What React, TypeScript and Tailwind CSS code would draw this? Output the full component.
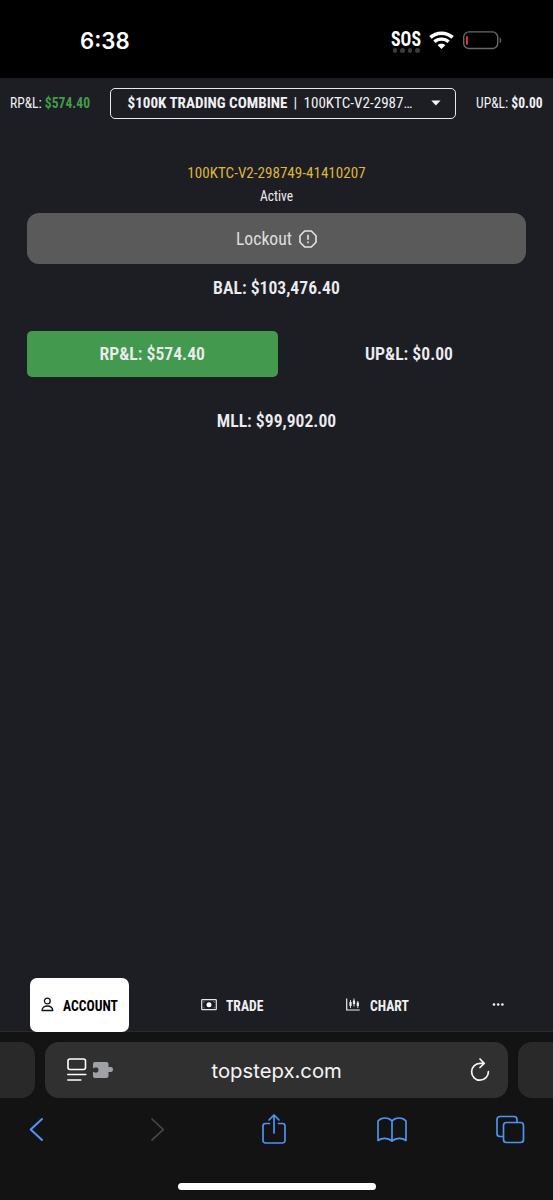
import React from "react";

const cond = "font-['Roboto_Condensed','Roboto',sans-serif] [font-stretch:75%] whitespace-nowrap";

function StatusBar() {
  return (
    <div className="flex h-[78px] bg-black text-white">
      <div className="ml-[80px] mt-[27px] w-[311px] font-['Inter',sans-serif] text-[22.2px] font-semibold leading-[28px]">
        6:38
      </div>
      <div className="mt-[28px] w-[30px]">
        <div className={`${cond} w-[34px] origin-left scale-x-[.87] text-[20.5px] font-bold leading-[22px]`}>SOS</div>
        <div className="-mt-[2px] flex gap-[3px] pl-[1.5px]">
          {[0, 1, 2, 3].map((i) => (
            <i key={i} className="h-[4.5px] w-[4.5px] rounded-full bg-[#3b3b3b]" />
          ))}
        </div>
      </div>
      <svg className="ml-[8px] mt-[31px]" width="25" height="19" viewBox="0 0 25 19" fill="none" stroke="#fff">
        <path d="M1.4 6.4C7.5 .7 17.5 .7 23.6 6.4" strokeWidth="3.5" />
        <path d="M5.4 10.7C9.2 7.2 15.8 7.2 19.6 10.7" strokeWidth="3.4" />
        <path d="M12.5 18 8.7 14.2C10.8 12.3 14.2 12.3 16.3 14.2Z" fill="#fff" stroke="none" />
      </svg>
      <svg className="ml-[8px] mt-[30px]" width="42" height="20" viewBox="0 0 42 20" fill="none">
        <rect x="1.7" y="1.9" width="34" height="16.6" rx="5.2" stroke="#686868" strokeWidth="1.4" />
        <path d="M37.7 7.5c2 .8 2 4.8 0 5.6Z" fill="#686868" />
        <rect x="4" y="6" width="1.8" height="8.8" rx=".9" fill="#f2383b" />
      </svg>
    </div>
  );
}

function Header() {
  return (
    <div className={`${cond} flex h-[50px] items-center text-[14px] text-[#f1f1f3]`}>
      <div className="w-[110px] pl-[10px] pt-px">
        <div className="w-[84px] origin-left scale-x-[.97]">
          RP&amp;L: <b className="font-bold text-[#419d4a]">$574.40</b>
        </div>
      </div>
      <div className="flex h-[31px] w-[346px] items-center rounded-[5px] border-[1.5px] border-[#e9e9ec] pl-[16.5px] text-[15.1px]">
        <div className="w-[166px] font-bold">$100K TRADING COMBINE</div>
        <div className="w-[10px]">|</div>
        <div className="w-[127.5px]">100KTC-V2-2987…</div>
        <svg width="10" height="6" viewBox="0 0 10 6" fill="#f5f5f5">
          <path d="M.3.5h9.2L4.9 5.4Z" />
        </svg>
      </div>
      <div className="ml-[20px] origin-left scale-x-[.97] pt-px">
        UP&amp;L: <b className="font-bold">$0.00</b>
      </div>
    </div>
  );
}

function Account() {
  return (
    <div className={`${cond} flex h-[850px] flex-col px-[27px] pt-[34px] text-center text-[#ececf0]`}>
      <div className="h-[22px] text-[15.1px] leading-[22px] text-[#dfb53c]">100KTC-V2-298749-41410207</div>
      <div className="mt-[2px] h-[20px] scale-x-[.965] text-[14px] leading-[21px]">Active</div>
      <div className="mt-[7px] flex h-[51px] w-[499px] items-center justify-center gap-[7px] rounded-[12px] bg-[#5a5a5a] text-[17.7px] text-[#dededf]">
        <span className="pt-px">Lockout</span>
        <svg width="18" height="18" viewBox="0 0 18 18" fill="none" stroke="#e5e5e6" strokeWidth="1.6" strokeLinejoin="round">
          <path d="M5.7 1h6.6L17 5.7v6.6L12.3 17H5.7L1 12.3V5.7Z" />
          <path d="M9 4.7v5M9 11.5v1.8" />
        </svg>
      </div>
      <div className="mt-[12px] h-[24px] text-[17.7px] font-semibold leading-[24px]">BAL: $103,476.40</div>
      <div className="mt-[31px] flex h-[46px] w-[526px] text-[17.7px] font-semibold leading-[46px]">
        <div className="w-[250.5px] rounded-[5px] bg-[#43994d]">RP&amp;L: $574.40</div>
        <div className="w-[263px]">UP&amp;L: $0.00</div>
      </div>
      <div className="mt-[32px] h-[24px] text-[17.7px] font-semibold leading-[24px]">MLL: $99,902.00</div>
    </div>
  );
}

function TabBar() {
  return (
    <nav className={`${cond} flex h-[54px] items-center border-b border-[#292a2d] text-[14px] font-bold text-[#f1f1f3]`}>
      <div className="ml-[30.4px] flex h-[54px] w-[99px] items-center rounded-[7px] bg-white pl-[10.5px] text-black">
        <svg width="13" height="15" viewBox="0 0 13 15" fill="none" stroke="#111" strokeWidth="1.3" strokeLinejoin="round">
          <circle cx="6.3" cy="4" r="2.9" />
          <path d="M1 13.5c0-6 10.8-6 10.8 0Z" />
        </svg>
        <span className="ml-[9px] origin-left scale-x-[.97] pt-[3px]">ACCOUNT</span>
      </div>
      <div className="ml-[71.6px] flex w-[145px] items-center">
        <svg width="16" height="12" viewBox="0 0 16 12">
          <rect x=".7" y=".7" width="14.6" height="10" rx=".6" fill="none" stroke="#e5e5e8" strokeWidth="1.2" />
          <circle cx="8" cy="5.7" r="2.5" fill="#fff" />
          <path d="M2.5 4V2.5H4M12 2.5h1.5V4M2.5 7.5V9H4M12 9h1.5V7.5" fill="none" stroke="#8a8a90" strokeWidth=".5" />
        </svg>
        <span className="ml-[9px] origin-left scale-x-[.97] pt-[3px]">TRADE</span>
      </div>
      <div className="flex w-[146px] items-center">
        <svg width="14" height="14" viewBox="0 0 14 14" stroke="#ededf0" fill="none">
          <path d="M.7 .5v11.5h13" strokeWidth="1.2" />
          <path d="M4.5 2v8M8 .5v8M11.8 3v7" strokeWidth=".9" />
          <path d="M4.5 4v4M8 2.5V6M11.8 4.5V8" strokeWidth="2.2" />
        </svg>
        <span className="ml-[10px] origin-left scale-x-[.97] pt-[3px]">CHART</span>
      </div>
      <svg width="13" height="4" viewBox="0 0 13 4" fill="#f4f4f4">
        <circle cx="2" cy="1.5" r="1.3" />
        <circle cx="6.2" cy="1.5" r="1.3" />
        <circle cx="10.4" cy="1.5" r="1.3" />
      </svg>
    </nav>
  );
}

function Browser() {
  return (
    <div className="h-[168px] bg-[#131313] pt-[10px]">
      <div className="flex h-[56px] gap-[10px]">
        <div className="w-[35px] rounded-r-[14px] bg-[#292929]" />
        <div className="flex w-[463px] items-center rounded-[14px] bg-[#303030] pl-[22px]">
          <svg width="47" height="24" viewBox="0 0 47 24" fill="none">
            <rect x="1" y="1" width="17.5" height="10.5" rx="2" stroke="#fff" strokeWidth="1.6" />
            <path d="M.8 16.5h18M.8 22h13" stroke="#fff" strokeWidth="1.5" strokeLinecap="round" />
            <path
              d="M28 4h11.5a2 2 0 0 1 2 2v3.2c1.2-.5 1.5-.2 2.4-.2 2.8 0 2.8 5 0 5-.9 0-1.2.3-2.4-.2v4.2a2 2 0 0 1-2 2H28a2 2 0 0 1-2-2v-4.2c1.4 1 5.5 1.8 5.5-1.8s-4.1-2.5-5.5-1.5V6a2 2 0 0 1 2-2Z"
              fill="#a0a0a9"
            />
          </svg>
          <div className="ml-[97.5px] w-[258.5px] pt-[2px] font-['Inter',sans-serif] text-[20.3px] leading-[28px] text-[#f4f4f4]">topstepx.com</div>
          <svg width="20" height="24" viewBox="0 0 20 24" fill="none" stroke="#f4f4f4" strokeWidth="1.7" strokeLinecap="round" strokeLinejoin="round">
            <path d="M13.7 5.4H10A8.4 8.4 0 1 0 18.4 13.7M10 1l4.2 4.4L10 9.5" />
          </svg>
        </div>
        <div className="w-[35px] rounded-l-[14px] bg-[#292929]" />
      </div>
      <div className="mt-[14px] h-[36px]">
        <svg width="553" height="36" viewBox="0 0 553 36" fill="none" stroke="#4e94f3" strokeWidth="1.7" strokeLinecap="round" strokeLinejoin="round">
          <path d="m42 7-11.3 10.6L42 28" strokeWidth="2.1" />
          <path d="m152 7 11.3 10.6L152 28" stroke="#464646" />
          <path d="M269.5 11.5h-4a2.5 2.5 0 0 0-2.5 2.5v14.5a2.5 2.5 0 0 0 2.5 2.5h17a2.5 2.5 0 0 0 2.5-2.5V14a2.5 2.5 0 0 0-2.5-2.5h-4M274 21V3m-5 5 5-5 5 5" />
          <path d="M392 9c-3.5-4-10.5-4-14 0v19.5c4-3 10-3 14 .5 4-3.5 10-3.5 14-.5V9c-3.5-4-10.5-4-14 0Zm0 0v20" />
          <path d="M503 24.5h-3a3 3 0 0 1-3-3V7.5a3 3 0 0 1 3-3h14a3 3 0 0 1 3 3v2.8" />
          <rect x="503.5" y="10.5" width="20" height="20" rx="3" />
        </svg>
      </div>
      <div className="mx-auto mt-[35px] h-[6.5px] w-[198px] rounded-full bg-white" />
    </div>
  );
}

export default function App() {
  return (
    <div className="h-[1200px] w-[553px] overflow-hidden bg-[#1d1e24]">
      <StatusBar />
      <Header />
      <Account />
      <TabBar />
      <Browser />
    </div>
  );
}
